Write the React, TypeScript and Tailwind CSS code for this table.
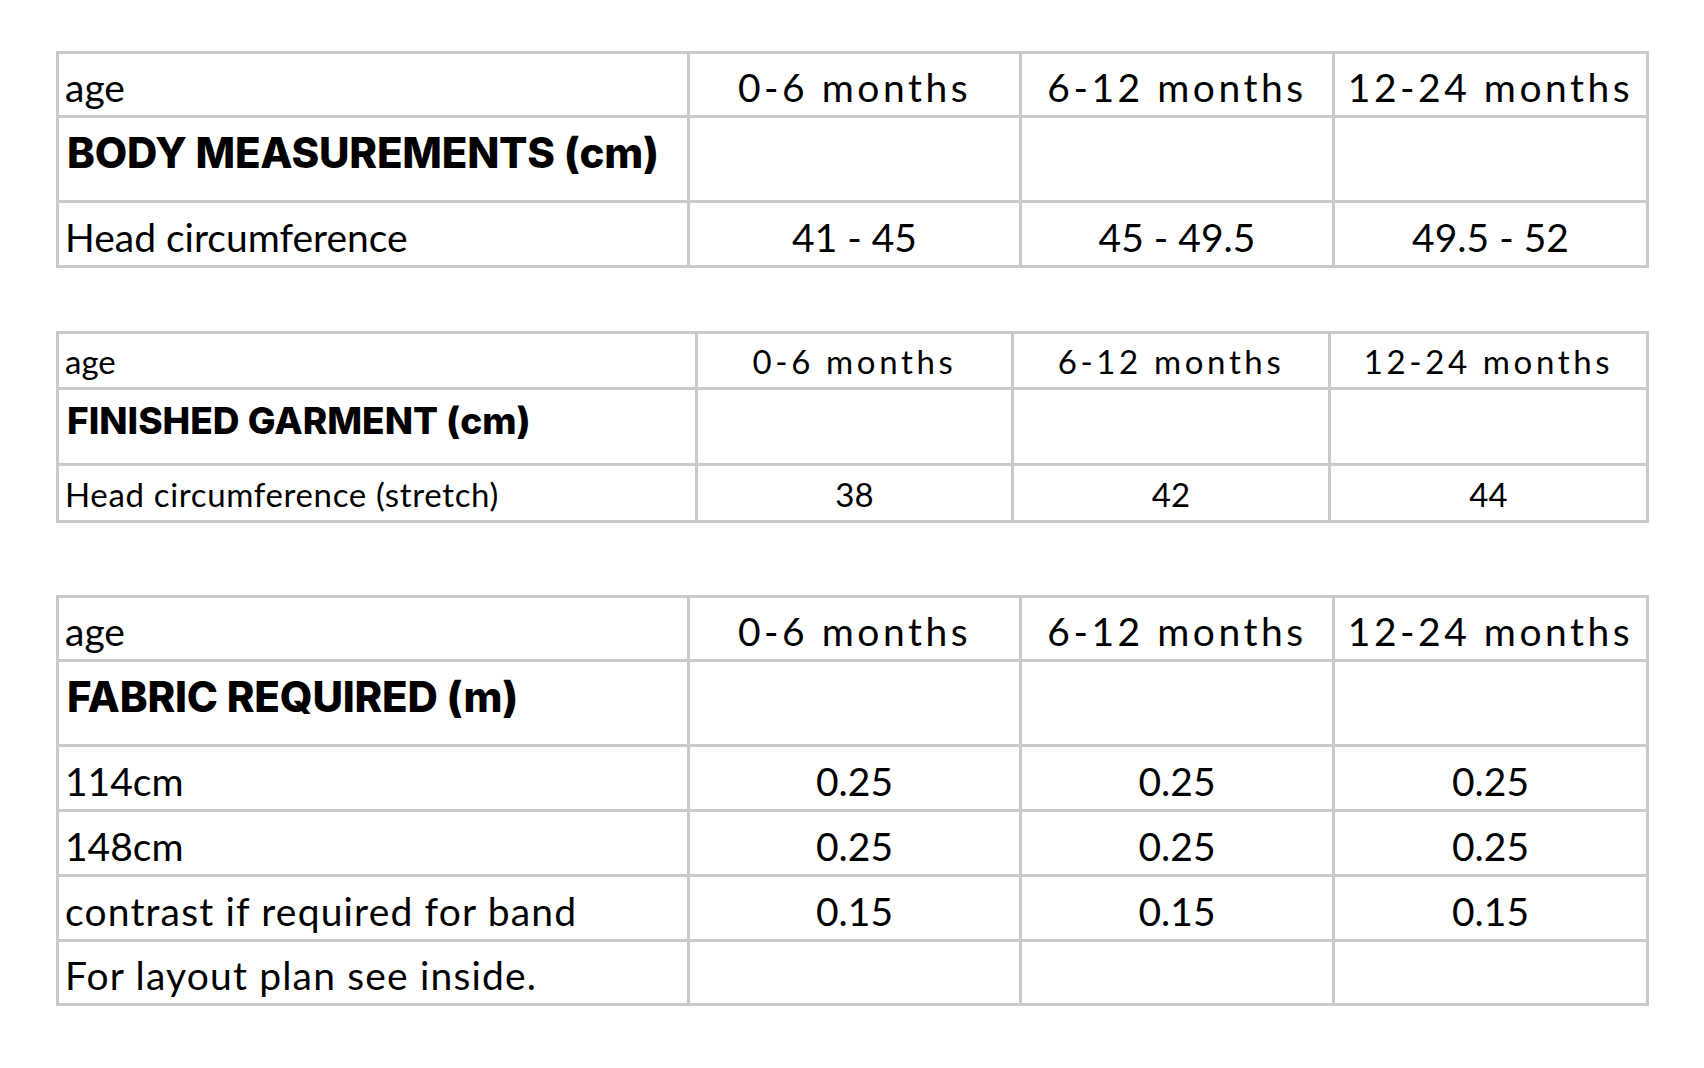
const months = ["0-6 months", "6-12 months", "12-24 months"];

type Size = {
  cols: string;
  body: string;
  track: string;
  head: string;
  headTrack: string;
  headPad: string;
  pad: string;
  topH: string;
  headH: string;
};

const large: Size = {
  cols: "grid-cols-[631px_332px_313px_314px]",
  body: "text-[39px]",
  track: "tracking-[0.09em]",
  head: "text-[42px]",
  headTrack: "tracking-[-0.005em]",
  headPad: "pt-[14px]",
  pad: "pb-[8px]",
  topH: "h-[64px]",
  headH: "h-[85px]",
};

const small: Size = {
  cols: "grid-cols-[639px_316px_317px_318px]",
  body: "text-[33px]",
  track: "tracking-[0.11em]",
  head: "text-[37px]",
  headTrack: "tracking-normal",
  headPad: "pt-[12px]",
  pad: "pb-[9px]",
  topH: "h-[56px]",
  headH: "h-[76px]",
};

const cell = "border-r-[3px] border-b-[3px] border-[#cacaca] flex";

function SizeTable({
  size,
  title,
  rows,
}: {
  size: Size;
  title: string;
  rows: { label: string; values: string[]; h: string; track?: string }[];
}) {
  return (
    <div
      className={`grid ${size.cols} w-[1593px] border-l-[3px] border-t-[3px] border-[#cacaca] ${size.body} leading-none text-black font-['Lato',sans-serif]`}
    >
      {/* age header */}
      <div className={`${cell} ${size.topH} items-end ${size.pad} pl-[6px]`}>age</div>
      {months.map((m) => (
        <div key={m} className={`${cell} ${size.topH} items-end justify-center ${size.pad} ${size.track}`}>
          {m}
        </div>
      ))}

      {/* section title */}
      <div
        className={`${cell} ${size.headH} items-start ${size.headPad} pl-[8px] ${size.head} ${size.headTrack} font-extrabold font-['Inter',sans-serif]`}
      >
        {title}
      </div>
      <div className={`${cell} ${size.headH}`} />
      <div className={`${cell} ${size.headH}`} />
      <div className={`${cell} ${size.headH}`} />

      {rows.map((r) => (
        <div key={r.label} className="contents">
          <div className={`${cell} ${r.h} items-end ${size.pad} pl-[6px] whitespace-nowrap ${r.track ?? ""}`}>
            {r.label}
          </div>
          {[0, 1, 2].map((i) => (
            <div key={i} className={`${cell} ${r.h} items-end justify-center ${size.pad}`}>
              {r.values[i] ?? ""}
            </div>
          ))}
        </div>
      ))}
    </div>
  );
}

export default function App() {
  return (
    <div className="min-h-screen w-full bg-white pt-[51px] pl-[56px]">
      <SizeTable
        size={large}
        title="BODY MEASUREMENTS (cm)"
        rows={[{ label: "Head circumference", values: ["41 - 45", "45 - 49.5", "49.5 - 52"], h: "h-[65px]" }]}
      />

      <div className="mt-[63px]">
        <SizeTable
          size={small}
          title="FINISHED GARMENT (cm)"
          rows={[
            {
              label: "Head circumference (stretch)",
              values: ["38", "42", "44"],
              h: "h-[57px]",
              track: "tracking-[0.02em]",
            },
          ]}
        />
      </div>

      <div className="mt-[72px]">
        <SizeTable
          size={large}
          title="FABRIC REQUIRED (m)"
          rows={[
            { label: "114cm", values: ["0.25", "0.25", "0.25"], h: "h-[65px]" },
            { label: "148cm", values: ["0.25", "0.25", "0.25"], h: "h-[65px]" },
            {
              label: "contrast if required for band",
              values: ["0.15", "0.15", "0.15"],
              h: "h-[65px]",
              track: "tracking-[0.03em]",
            },
            { label: "For layout plan see inside.", values: [], h: "h-[64px]", track: "tracking-[0.03em]" },
          ]}
        />
      </div>
    </div>
  );
}
